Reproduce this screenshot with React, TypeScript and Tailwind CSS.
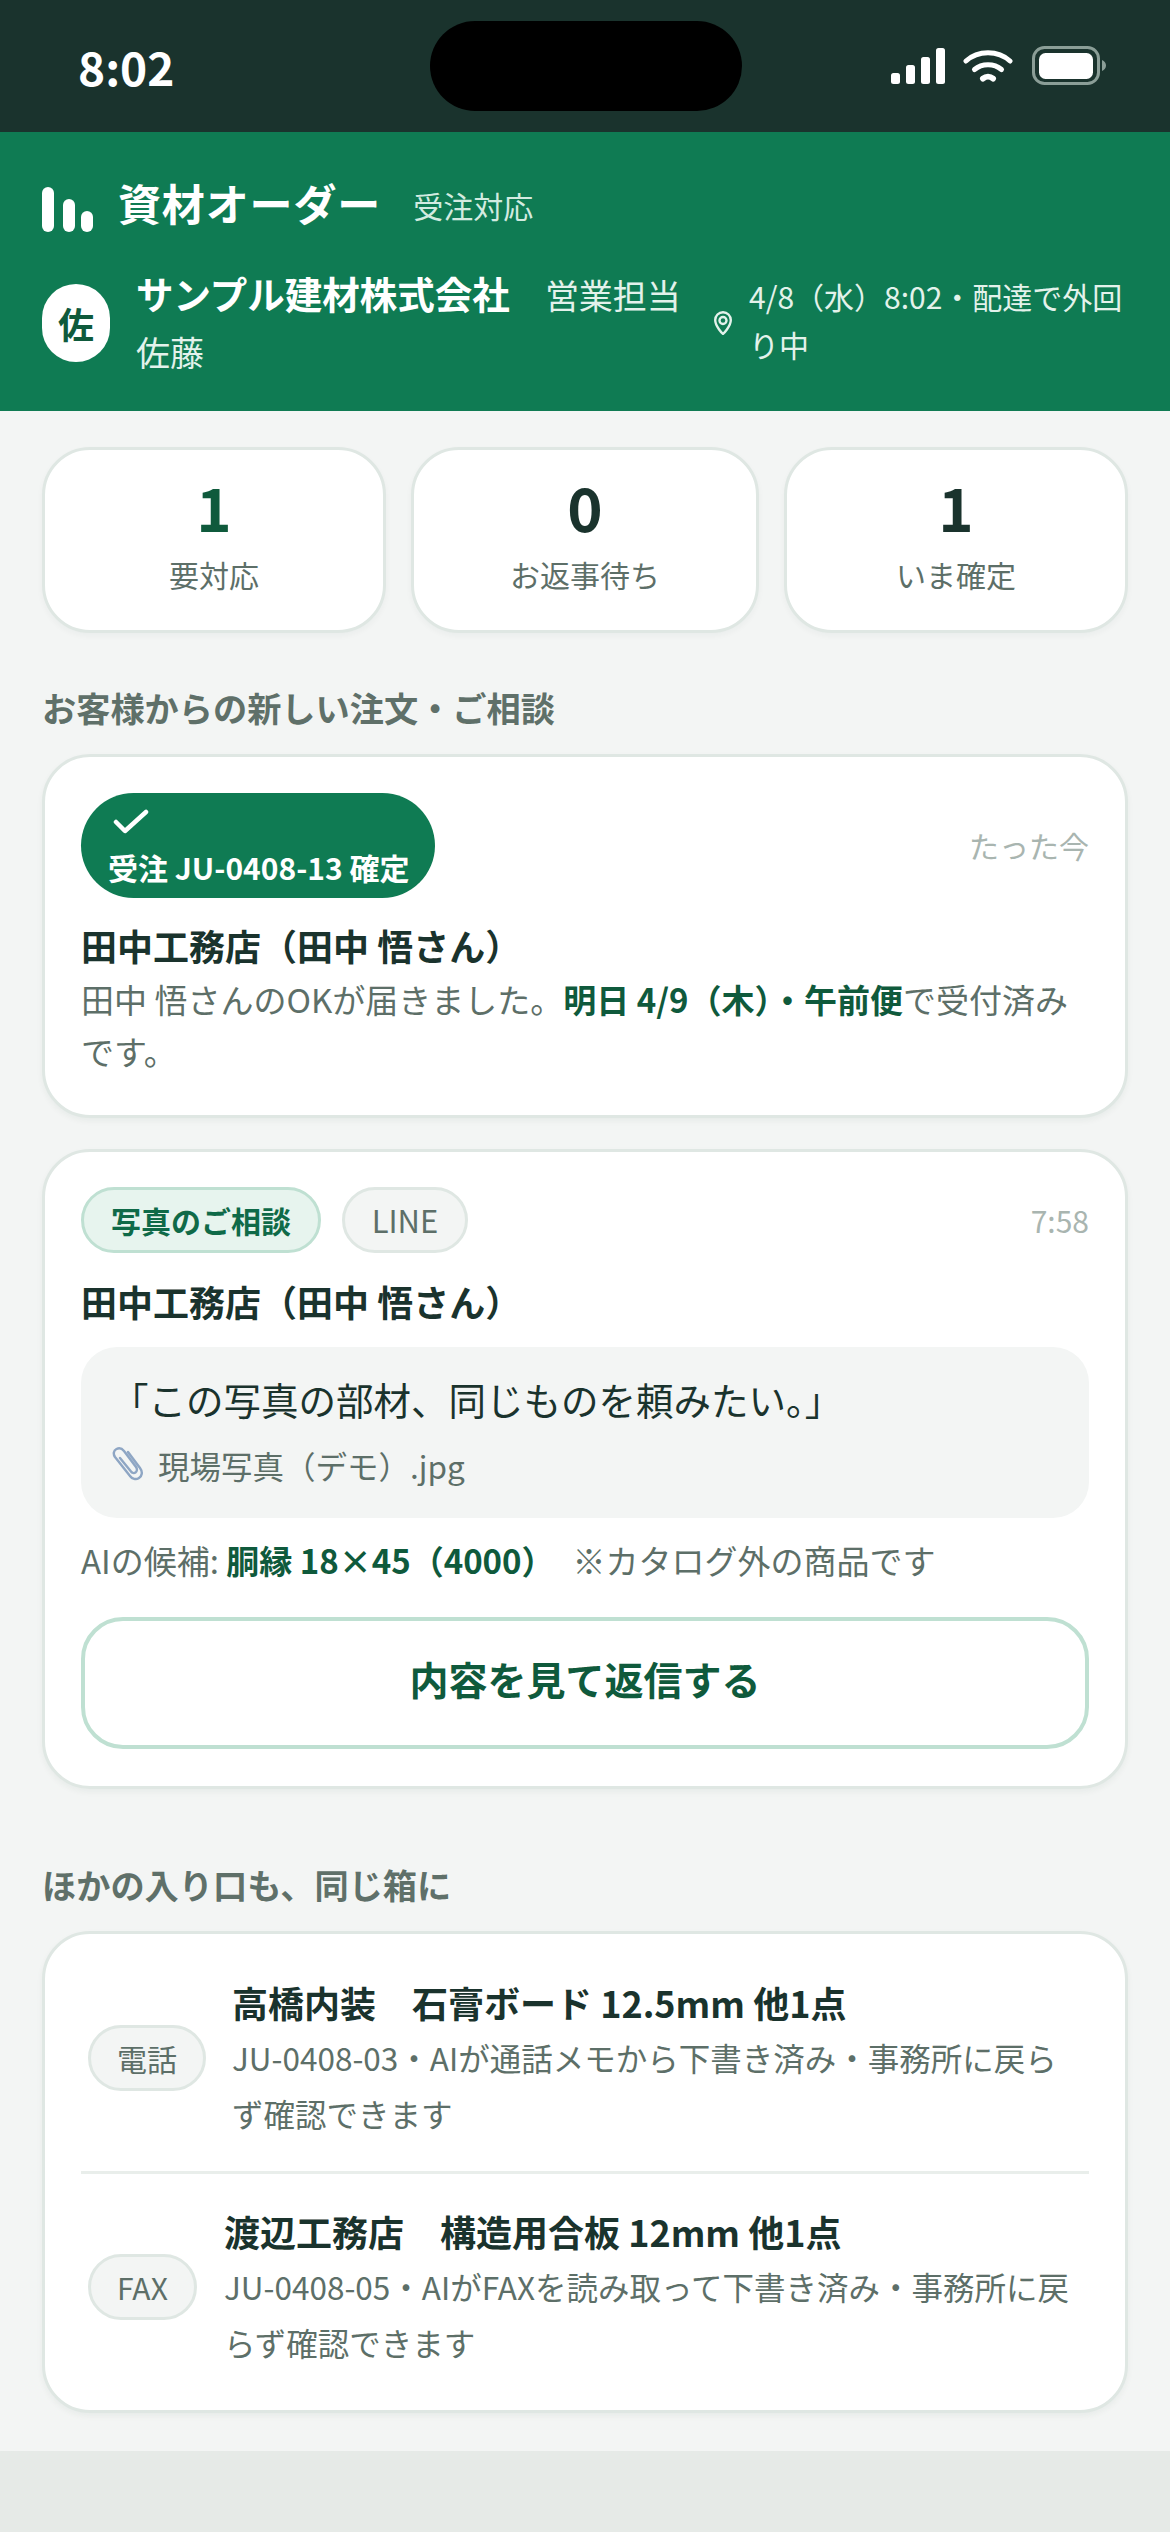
const font = { fontFamily: '"Noto Sans CJK JP", "Noto Sans", sans-serif' };

function StatusIcons() {
  return (
    <div className="flex items-center">
      <svg width="56" height="36" viewBox="0 0 56 36" className="block">
        <rect x="1" y="25" width="9" height="11" rx="2.5" fill="#fff" />
        <rect x="16" y="17" width="9" height="19" rx="2.5" fill="#fff" />
        <rect x="31" y="9" width="9" height="27" rx="2.5" fill="#fff" />
        <rect x="46" y="0" width="9" height="36" rx="2.5" fill="#fff" />
      </svg>
      <svg width="50" height="34" viewBox="0 0 50 34" fill="none" stroke="#fff" strokeWidth="5" strokeLinecap="round" className="ml-[17px] block">
        <path d="M3 12C15 1 35 1 47 12" />
        <path d="M11.5 20.5C19 14 31 14 38.5 20.5" />
        <path d="M20 29.5C23 27 27 27 30 29.5" strokeWidth="6" />
      </svg>
      <svg width="74" height="40" viewBox="0 0 74 40" fill="none" className="ml-[19px] block">
        <rect x="1.5" y="1.5" width="65" height="36" rx="11" stroke="#8b9e97" strokeWidth="3" />
        <rect x="7" y="7" width="54" height="26" rx="6.5" fill="#fff" />
        <path d="M70 14C72.5 15 74 17 74 19.5C74 22 72.5 24 70 25Z" fill="#8b9e97" />
      </svg>
    </div>
  );
}

function StatusBar() {
  return (
    <div className="relative flex h-[132px] items-center justify-between bg-[#1a332d] pl-[78px] pr-[64px]">
      <span className="text-[46px] leading-none font-bold text-white">8:02</span>
      <div className="absolute left-[430px] top-[21px] h-[90px] w-[312px] rounded-full bg-black" />
      <StatusIcons />
    </div>
  );
}

function Header() {
  return (
    <header className="h-[279px] bg-[#0f7b53] px-[42px] text-white">
      <div className="flex items-end pt-[48px]">
        <div className="flex h-[45px] items-end">
          <span className="h-[45px] w-[12px] rounded-full bg-white" />
          <span className="ml-[9px] h-[33px] w-[12px] rounded-full bg-white" />
          <span className="ml-[6px] h-[21px] w-[12px] rounded-full bg-white" />
        </div>
        <span className="ml-[25px] -translate-y-[4px] text-[43px] leading-[52px] font-bold tracking-[0.02em]">資材オーダー</span>
        <span className="ml-[32px] -translate-y-[4px] text-[30px] leading-[46px] text-[#d3ebe0]">受注対応</span>
      </div>
      <div className="mt-[33px] flex items-center">
        <div className="flex h-[78px] w-[68px] shrink-0 items-center justify-center rounded-full bg-white text-[36px] font-bold text-[#0f5a3c]">佐</div>
        <div className="ml-[26px] w-[570px] shrink-0 -translate-y-[1px] text-[34px] leading-[57px]">
          <span className="text-[37.5px] font-bold">サンプル建材株式会社</span>
          <span className="ml-[35px] text-[#e3f2eb]">営業担当 佐藤</span>
        </div>
        <svg width="18" height="24" viewBox="0 0 18 24" fill="none" stroke="#e3f2eb" strokeWidth="2.4" strokeLinejoin="round" className="ml-[8px] shrink-0">
          <path d="M9 23C9 23 1.2 15.5 1.2 9A7.8 7.8 0 0 1 16.8 9C16.8 15.5 9 23 9 23Z" />
          <circle cx="9" cy="9.500" r="3.500" />
        </svg>
        <div className="ml-[17px] -translate-y-[3px] text-[30px] leading-[48px] text-[#e3f2eb]">4/8（水）8:02・配達で外回り中</div>
      </div>
    </header>
  );
}

function Stat({ value, label, color, className }: { value: string; label: string; color: string; className: string }) {
  return (
    <div className={`${className} flex h-[186px] flex-col items-center rounded-[48px] border-[3px] border-[#dfe7e3] bg-white pt-[23px] shadow-[0_3px_6px_rgba(26,51,45,0.04)]`}>
      <span className={`text-[60px] leading-[66px] font-bold ${color}`}>{value}</span>
      <span className="mt-[12px] text-[30px] leading-[46px] text-[#5d6f68]">{label}</span>
    </div>
  );
}

function SectionTitle({ children, className }: { children: string; className: string }) {
  return <h2 className={`${className} text-[34.200px] leading-[48px] font-bold text-[#5f7069]`}>{children}</h2>;
}

function Card({ children, className }: { children: React.ReactNode; className: string }) {
  return <section className={`${className} rounded-[48px] border-[3px] border-[#dfe7e3] bg-white shadow-[0_3px_6px_rgba(26,51,45,0.05)]`}>{children}</section>;
}

function ConfirmedCard() {
  return (
    <Card className="mt-[23px] h-[364px] px-[36px] pt-[36px]">
      <div className="flex items-center justify-between">
        <div className="h-[105px] w-[354px] rounded-full bg-[#0f7b53] pl-[27px] pt-[16px] text-white">
          <svg width="36" height="26" viewBox="0 0 36 26" fill="none" stroke="#fff" strokeWidth="4.500" strokeLinecap="round" strokeLinejoin="round" className="ml-[5px] block">
            <path d="M3 13 12 22 33 3" />
          </svg>
          <div className="mt-[10px] text-[30px] leading-[44px] font-bold whitespace-nowrap">受注 JU-0408-13 確定</div>
        </div>
        <span className="text-[30px] text-[#a9b5b0]">たった今</span>
      </div>
      <h3 className="mt-[21px] text-[36px] leading-[52px] font-bold text-[#1a332d]">田中工務店（田中 悟さん）</h3>
      <p className="mt-[2px] text-[33px] leading-[52px] text-[#5d6f68]">
        田中 悟さんのOKが届きました。<strong className="font-bold text-[#0f5a3c]">明日 4/9（木）・午前便</strong>で受付済みです。
      </p>
    </Card>
  );
}

function ConsultCard() {
  return (
    <Card className="mt-[31px] h-[640px] px-[36px] pt-[35px]">
      <div className="flex items-center">
        <span className="flex h-[66px] w-[240px] items-center justify-center rounded-full border-[3px] border-[#bfe0d2] bg-[#e7f4ee] text-[30px] font-bold text-[#0f6a48]">写真のご相談</span>
        <span className="ml-[21px] flex h-[66px] w-[126px] items-center justify-center rounded-full border-[3px] border-[#dfe7e3] bg-[#f3f5f4] text-[31px] text-[#5d6f68]">LINE</span>
        <span className="ml-auto text-[30px] text-[#a9b5b0]">7:58</span>
      </div>
      <h3 className="mt-[22px] text-[36px] leading-[52px] font-bold text-[#1a332d]">田中工務店（田中 悟さん）</h3>
      <div className="mt-[20px] h-[171px] rounded-[36px] bg-[#f3f5f4] pl-[30px] pt-[25px]">
        <p className="text-[37.500px] leading-[54px] text-[#1a332d]">「この写真の部材、同じものを頼みたい。」</p>
        <div className="mt-[14px] flex items-center">
          <svg width="34" height="36" viewBox="0 0 34 36" fill="none" stroke="#8ea6c4" strokeWidth="2.400" strokeLinecap="round" strokeLinejoin="round" className="shrink-0">
            <path d="M17 5 29 21C32 25 31 29 28 31C25 33 21 32 19 29L4 10C2 7 2.500 3.500 5.500 2C8.500 0.500 11 1.500 13 4L25 20C26.500 22 26 24.500 24.500 25.500C23 26.500 21 26 20 24.500L9 11" />
          </svg>
          <span className="ml-[13px] text-[31.500px] leading-[50px] text-[#5d6f68]">現場写真（デモ）.jpg</span>
        </div>
      </div>
      <p className="mt-[17px] text-[33px] leading-[50px] whitespace-nowrap text-[#5d6f68]">
        AIの候補: <strong className="font-bold text-[#0f5a3c]">胴縁 18×45（4000）</strong>
        <span className="ml-[18px]">※カタログ外の商品です</span>
      </p>
      <button type="button" className="mt-[32px] flex h-[132px] w-full items-center justify-center rounded-[42px] border-[4px] border-[#bfe0d2] bg-white pb-[9px] text-[39px] font-bold text-[#0f5a3c]">
        内容を見て返信する
      </button>
    </Card>
  );
}

function ChannelRow({ tag, tagClass, title, desc, textClass }: { tag: string; tagClass: string; title: string; desc: string; textClass: string }) {
  return (
    <div className="flex items-center py-[27px]">
      <span className={`${tagClass} ml-[7px] flex h-[66px] shrink-0 items-center justify-center rounded-full border-[3px] border-[#dfe7e3] bg-[#f3f5f4] text-[30px] text-[#5d6f68]`}>{tag}</span>
      <div className={textClass}>
        <div className="text-[36px] leading-[60px] font-bold whitespace-nowrap text-[#1a332d]">{title}</div>
        <div className="-translate-y-[3px] text-[31.500px] leading-[56px] text-[#5d6f68]">{desc}</div>
      </div>
    </div>
  );
}

export default function App() {
  return (
    <div className="flex h-[2532px] flex-col bg-[#f3f5f4]" style={font}>
      <StatusBar />
      <Header />
      <main className="flex-1 px-[42px] pt-[36px]">
        <div className="flex gap-[25px]">
          <Stat value="1" label="要対応" color="text-[#0f5a3c]" className="w-[344px]" />
          <Stat value="0" label="お返事待ち" color="text-[#1a332d]" className="w-[348px]" />
          <Stat value="1" label="いま確定" color="text-[#1a332d]" className="w-[344px]" />
        </div>
        <SectionTitle className="mt-[50px]">お客様からの新しい注文・ご相談</SectionTitle>
        <ConfirmedCard />
        <ConsultCard />
        <SectionTitle className="mt-[71px]">ほかの入り口も、同じ箱に</SectionTitle>
        <Card className="mt-[23px] h-[482px] px-[36px] pt-[11px]">
          <ChannelRow
            tag="電話"
            tagClass="w-[118px]"
            textClass="ml-[26px] min-w-0 flex-1 pr-[8px]"
            title="高橋内装　石膏ボード 12.5mm 他1点"
            desc="JU-0408-03・AIが通話メモから下書き済み・事務所に戻らず確認できます"
          />
          <div className="h-[3px] bg-[#e9eeeb]" />
          <ChannelRow
            tag="FAX"
            tagClass="w-[109px]"
            textClass="ml-[27px] min-w-0 flex-1"
            title="渡辺工務店　構造用合板 12mm 他1点"
            desc="JU-0408-05・AIがFAXを読み取って下書き済み・事務所に戻らず確認できます"
          />
        </Card>
      </main>
      <div className="h-[81px] bg-[#e6eae7]" />
    </div>
  );
}
